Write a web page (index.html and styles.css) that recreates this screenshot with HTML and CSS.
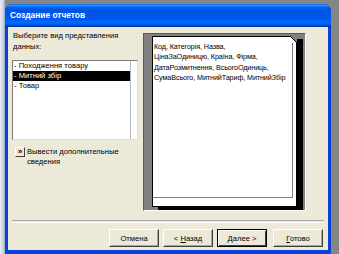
FILE: index.html
```html
<!DOCTYPE html>
<html lang="ru">
<head>
    <meta charset="UTF-8">
    <title>Создание отчетов</title>
    <link rel="stylesheet" href="styles.css">
</head>
<body>
    <div class="desk-left"></div>
    <div class="window">
        <div class="titlebar">Создание отчетов</div>
        <div class="client">
            <div class="main">
                <div class="left">
                    <div class="prompt">Выберите вид представления данных:</div>
                    <div class="list">
                        <div class="list-inner">
                            <div class="item">- Походження товару</div>
                            <div class="item selected">- Митний збір</div>
                            <div class="item">- Товар</div>
                        </div>
                    </div>
                    <div class="more">
                        <span class="more-btn">»</span>
                        <span class="more-text">Вывести дополнительные сведения</span>
                    </div>
                </div>
                <div class="preview">
                    <div class="sheet">
                        <div class="page">Код, Категорія, Назва,<br>ЦінаЗаОдиницю, Країна, Фірма,<br>ДатаРозмитнення, ВсьогоОдиниць,<br>СумаВсього, МитнийТариф, МитнийЗбір</div>
                    </div>
                </div>
            </div>
            <div class="sep"></div>
            <div class="buttons">
                <button class="btn">Отмена</button>
                <button class="btn">&lt; <u>Н</u>азад</button>
                <button class="btn btn-default"><u>Д</u>алее &gt;</button>
                <button class="btn btn-last"><u>Г</u>отово</button>
            </div>
        </div>
    </div>
</body>
</html>
```

FILE: styles.css
```css
body {
    margin: 0;
    width: 339px;
    height: 254px;
    overflow: hidden;
    display: flex;
    align-items: flex-start;
    background: #858585;
    font-family: 'Liberation Sans', Arial, sans-serif;
    font-size: 7.6px;
    color: #000;
}

.desk-left {
    width: 5px;
    height: 254px;
    background: linear-gradient(90deg, #e8ecf4 0%, #cdd6e6 60%, #9aa6c0 100%);
}

.window {
    margin-top: 4px;
    width: 326px;
    height: 250px;
    display: flex;
    flex-direction: column;
    background: #0a3fd8;
    border-radius: 7px 7px 0 0;
}

.titlebar {
    height: 23px;
    line-height: 23px;
    padding-left: 5px;
    color: #fff;
    font-weight: bold;
    font-size: 8.4px;
    border-radius: 7px 7px 0 0;
    background: linear-gradient(180deg, #0058ee 0%, #3593ff 5%, #127dff 10%, #0262ee 16%, #0054e3 26%, #0055eb 56%, #005bf5 68%, #026afe 78%, #0062ef 86%, #0052d6 92%, #0040ab 96%, #003092 100%);
}

.client {
    margin: 0 3px;
    height: 223px;
    background: #ece9d8;
    padding: 3px 4px 0 4px;
    box-sizing: border-box;
}

.main {
    display: flex;
    gap: 5px;
    height: 181px;
}

.left {
    width: 126px;
}

.prompt {
    line-height: 11px;
    padding-left: 1px;
}

.list {
    margin-top: 8px;
    height: 80px;
    box-sizing: border-box;
    background: #fff;
    border: 1px solid;
    border-color: #7a7a7a #e0ded0 #e0ded0 #7a7a7a;
}

.list-inner {
    width: 117px;
    height: 100%;
    border-right: 1px solid #b8b8b8;
}

.item {
    height: 10px;
    line-height: 10px;
    padding-left: 1px;
    white-space: nowrap;
}

.selected {
    background: #000;
    color: #fff;
}

.more {
    margin-top: 7px;
    display: flex;
    align-items: flex-start;
    gap: 2px;
    padding-left: 3px;
}

.more-btn {
    flex: none;
    width: 10px;
    height: 10px;
    box-sizing: border-box;
    border: 1px solid;
    border-color: #fff #404040 #404040 #fff;
    background: #ece9d8;
    font-size: 8px;
    line-height: 7px;
    text-align: center;
    font-weight: bold;
}

.more-text {
    line-height: 10px;
}

.preview {
    margin-top: 3px;
    width: 163px;
    height: 178px;
    box-sizing: border-box;
    background: #808080;
    border: 1px solid;
    border-color: #5a5a5a #fff #fff #5a5a5a;
    padding: 2px 0 0 8px;
}

.sheet {
    position: relative;
    width: 145px;
    height: 171px;
    box-sizing: border-box;
    background: #fff;
    border: 1px solid #000;
    box-shadow: 6px 3px 0 #000;
    padding: 0 3px 8px 0;
}

.sheet::after {
    content: "";
    position: absolute;
    top: -1px;
    right: -1px;
    width: 7px;
    height: 7px;
    background: linear-gradient(225deg, #808080 0%, #808080 48%, #000 50%, #fff 56%, #fff 100%);
}

.page {
    height: 100%;
    box-sizing: border-box;
    border-right: 1px solid #808080;
    border-bottom: 1px solid #808080;
    padding: 5px 0 0 1px;
    font-size: 7.2px;
    letter-spacing: -0.1px;
    line-height: 10.3px;
    white-space: nowrap;
}

.sep {
    margin-top: 9px;
    height: 1px;
    border-top: 1px solid #aca899;
    border-bottom: 1px solid #fff;
}

.buttons {
    margin-top: 6px;
    display: flex;
    justify-content: flex-end;
    gap: 4px;
    padding-right: 1px;
}

.btn {
    width: 50px;
    height: 18px;
    padding: 0;
    font-family: inherit;
    font-size: 7.6px;
    color: #000;
    background: #ece9d8;
    border: 1px solid;
    border-color: #fff #404040 #404040 #fff;
    box-shadow: inset -1px -1px 0 #aca899;
}

.btn-default {
    border: 1px solid #000;
    box-shadow: inset 1px 1px 0 #fff, inset -1px -1px 0 #404040;
}

.btn-last {
    margin-left: 2px;
}
```
